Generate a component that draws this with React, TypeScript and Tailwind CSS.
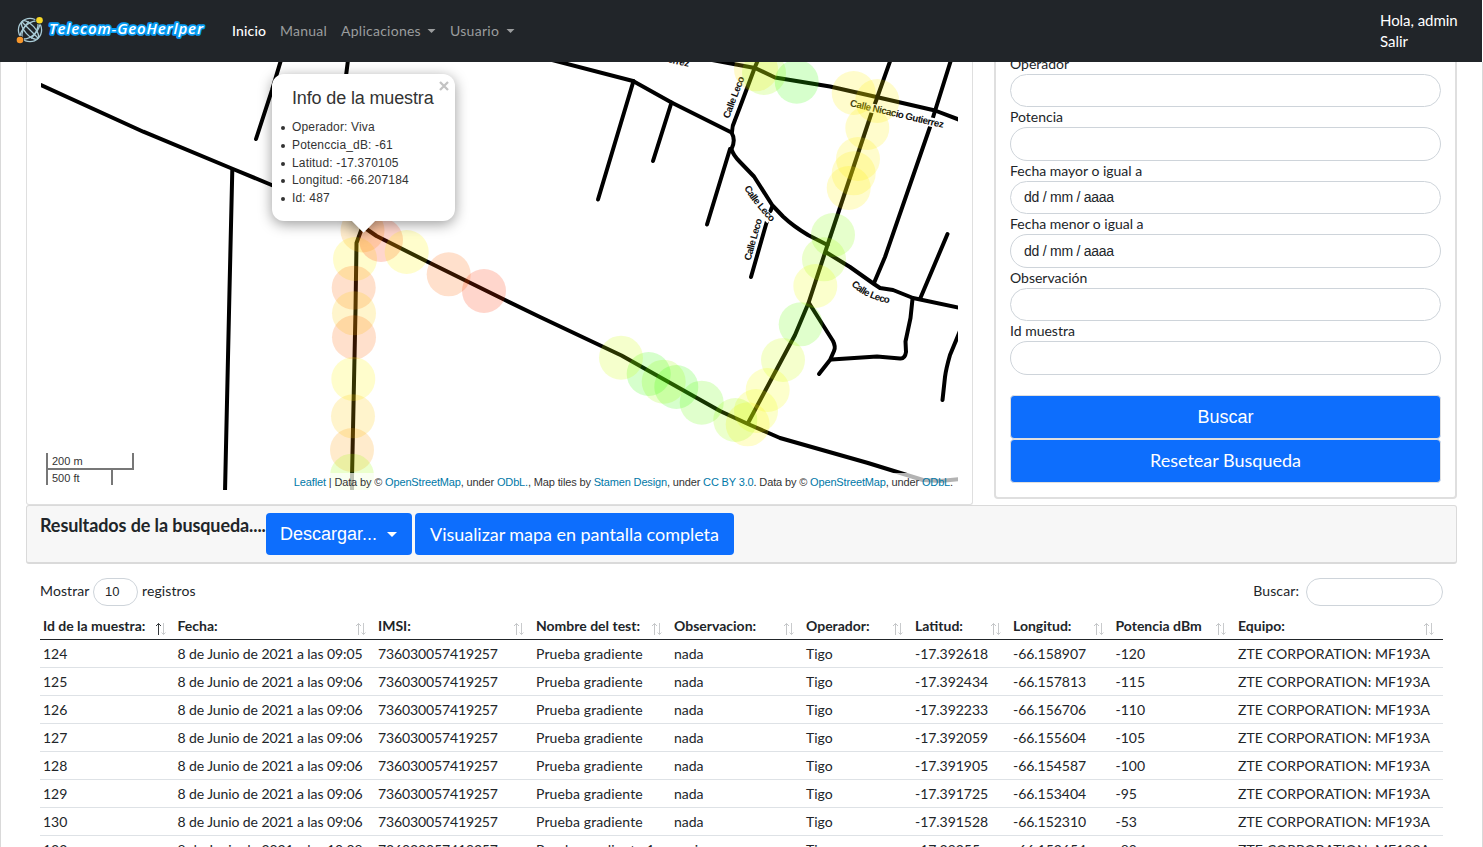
import React from 'react';

const ROADS = [
  'M41 85L143.3 131.7L233 169L274 186',
  'M232.3 170L229.5 290L225 492',
  'M281 60L272 90L256 139',
  'M348 60L346 76',
  'M362 228L356.5 243L355.5 310L352 477V492',
  'M365 228L376.5 236L428 262L505 300L540 317L621.5 355.5L720 411L748 424L780 438L868 463L923 480L940 481L960 479',
  'M552 60L633 81L671.5 102.5L731.5 132.5Q736 140 731.5 149Q733 155 740 162L754 176.5L772.5 205.5L783 216.5Q793 226 808 235L827.5 245',
  'M633.5 81L598 199.5',
  'M671.5 102.5L653 161',
  'M730 149L707 224.5',
  'M732 132Q732 126 735 120L740 107L755 67L758 60',
  'M712 60L755 68L775 77.5L830 86.5L876.5 97L935 110.5L960 120',
  'M890.5 60L877 98L871.5 113L827.5 245L808.5 303L795 335L748 423',
  'M951 60L935 111L930 127L885 257L874 283',
  'M826.5 252.5L850 267L874 284L880 288L893 290L913 298L960 308',
  'M947.5 234L920 299',
  'M912.5 299L910.5 318L905.5 341.5L906 352Q905 359 900 358.5L877 356.5L831.5 359.5',
  'M809 303L833 341Q836 347 834 351L830 360L819 374',
  'M960 331L950 355Q946 369 945 377L942.5 400',
  'M772.5 206L770.5 211M767 221L751 277',
];

const SAMPLES: [number, number, string][] = [
  [362.5, 230.5, '#ffa200'], [355, 259, '#fff000'], [353.7, 287.7, '#ff6600'], [381, 240, '#ff3300'],
  [406.7, 252, '#fff600'], [448.7, 274.3, '#ff6600'], [484, 291, '#ff3300'], [354, 313.3, '#ffcc00'],
  [354, 337.3, '#ff6600'], [353.3, 379, '#fff600'], [353, 416.3, '#ffc800'], [352, 450, '#ff9900'],
  [352, 475.7, '#99ff00'], [756, 69.3, '#ffe600'], [764, 73, '#99ff00'], [796.7, 81.7, '#33ff00'],
  [853.7, 93, '#ffee00'], [877.3, 101, '#ffee00'], [867.3, 128, '#ffee00'], [858, 159, '#ffee00'],
  [853.7, 173.3, '#ffee00'], [848.7, 188, '#ffee00'], [833, 235, '#80ff00'], [824, 259.3, '#a0ff00'],
  [815.3, 286, '#eaff00'], [800.7, 324.3, '#66ff00'], [783, 360, '#ccff00'], [767.7, 390, '#f6ff00'],
  [756, 411, '#f0ff00'], [747.7, 424.3, '#fff600'], [735.3, 420, '#99ff00'], [701.7, 402.7, '#66ff00'],
  [676.3, 387, '#33ff00'], [663.7, 381.7, '#99ff00'], [648.7, 374, '#33ff00'], [621, 357.7, '#ccff00'],
];

const STREETS = [
  { name: 'Calle Leco', d: 'M729 119L745 77', length: 44 },
  { name: 'Calle Leco', d: 'M750.500 261L762.500 218', length: 43 },
  { name: 'Calle Leco', d: 'M744 188Q753 204 772 223', length: 44 },
  { name: 'Calle Leco', d: 'M851 285Q866 300 893 304', length: 43 },
  { name: 'Calle Nicacio Gutierrez', d: 'M849.500 106L945 128.500', length: 96 },
  { name: 'Calle Nicacio Gutierrez', d: 'M595 45L691 67.500', length: 96 },
];

function MapCanvas() {
  return (
    <svg className="block h-[428px] w-[917px]" viewBox="41 62 917 428">
      <defs>
        {STREETS.map((s) => <path key={s.d} id={s.d.replace(/\W/g, '')} d={s.d} />)}
      </defs>
      <g fill="none" stroke="#000" strokeWidth="4" strokeLinecap="round" strokeLinejoin="round">
        {ROADS.map((d) => <path key={d} d={d} />)}
        {STREETS.map((s) => (
          <path key={s.d} d={s.d} stroke="#fff" strokeWidth="9" strokeLinecap="butt" transform={s.name === 'Calle Leco' ? 'translate(-1.500 -3)' : 'translate(0.500 -3)'} />
        ))}
      </g>
      <g fontFamily="Liberation Sans, sans-serif" fontSize="9.800" fontWeight="700" fill="#111">
        {STREETS.map((s) => (
          <text key={s.d}><textPath href={`#${s.d.replace(/\W/g, '')}`} textLength={s.length}>{s.name}</textPath></text>
        ))}
      </g>
      <g fillOpacity="0.2">
        {SAMPLES.map(([x, y, c]) => <circle key={`${x}-${y}`} cx={x} cy={y} r="22" fill={c} />)}
      </g>
    </svg>
  );
}

function Popup() {
  return (
    <div className="absolute left-[231px] top-[12px] h-[147px] w-[183px] text-[#333]">
      <div className="absolute left-[83px] top-[138px] size-[17px] rotate-45 bg-white shadow-[0_3px_14px_rgba(0,0,0,0.4)]" />
      <div className="relative h-full rounded-xl bg-white shadow-[0_3px_14px_rgba(0,0,0,0.4)]" />
      <div className="absolute left-[83px] top-[138px] size-[17px] rotate-45 bg-white" />
      <div className="absolute inset-0 pl-5 pt-[13px]">
        <svg className="absolute right-[6px] top-[7px] size-[10px]" viewBox="0 0 10 10"><path d="M1 1L9 9M9 1L1 9" stroke="#c3c3c3" strokeWidth="2.3" /></svg>
        <h4 className="whitespace-nowrap text-[18px] leading-[22px] tracking-[-0.14px]">Info de la muestra</h4>
        <ul className="mt-[10px] text-[12px] leading-[17.800px] tracking-[0.17px]">
          {['Operador: Viva', 'Potenccia_dB: -61', 'Latitud: -17.370105', 'Longitud: -66.207184', 'Id: 487'].map((t) => (
            <li key={t} className="relative whitespace-nowrap before:absolute before:-left-[11px] before:top-[7px] before:size-1 before:rounded-full before:bg-[#333]">{t}</li>
          ))}
        </ul>
      </div>
    </div>
  );
}

const A = ({ children }: { children: string }) => <span className="text-[#0078a8]">{children}</span>;

function Caret({ className }: { className: string }) {
  return <svg className={className} viewBox="0 0 10 5"><path d="M0 0H10L5 5Z" fill="currentColor" /></svg>;
}

function Logo() {
  return (
    <svg className="h-[62px] w-[208px]" viewBox="0 0 208 62">
      <g fill="none" stroke="#a9cbd6" strokeWidth="1.3">
        <circle cx="30" cy="30" r="11.6" />
        <ellipse cx="30" cy="30" rx="5" ry="11.6" transform="rotate(-42 30 30)" />
        <ellipse cx="30" cy="30" rx="11.6" ry="6" transform="rotate(-42 30 30)" />
        <path d="M22 22L38 38M22 38Q21 29 29 21.500M38 22Q39 31 31 38.500" />
      </g>
      <circle cx="39.500" cy="20.300" r="4.200" fill="#212529" />
      <circle cx="39.500" cy="20.300" r="3.300" fill="#f7d826" />
      <circle cx="20" cy="40" r="4.200" fill="#212529" />
      <circle cx="20" cy="40" r="3.300" fill="#f7962a" />
      <g fontFamily="Open Sans, sans-serif" fontSize="15" fontStyle="italic" fontWeight="600">
        <text x="49" y="33.500" textLength="154" fill="#fff" stroke="#069df5" strokeWidth="3.600" strokeLinejoin="round" paintOrder="stroke">Telecom-GeoHerlper</text>
      </g>
    </svg>
  );
}

function Navbar() {
  return (
    <header className="relative z-10 flex h-[62px] w-[1482px] items-center bg-[#212529] text-[14px] text-[#9b9d9e]">
      <Logo />
      <nav className="-mt-[2px] ml-6 flex items-center gap-[14px] whitespace-nowrap">
        <span className="font-medium tracking-[0.15px] text-white">Inicio</span>
        <span className="tracking-[0.22px]">Manual</span>
        <span className="flex items-center tracking-[0.25px]">Aplicaciones<Caret className="ml-[6px] mt-px h-[4px] w-[9px]" /></span>
        <span className="flex items-center tracking-[0.3px]">Usuario<Caret className="ml-[7px] mt-px h-[4px] w-[9px]" /></span>
      </nav>
      <div className="ml-auto mr-[24px] w-[78px] whitespace-nowrap text-[15px] leading-[21px] tracking-[-0.05px] text-white">
        <div>Hola, admin</div>
        <div>Salir</div>
      </div>
    </header>
  );
}

const FIELDS: [string, string][] = [
  ['Operador', ''], ['Potencia', ''], ['Fecha mayor o igual a', 'dd / mm / aaaa'],
  ['Fecha menor o igual a', 'dd / mm / aaaa'], ['Observación', ''], ['Id muestra', ''],
];

function SearchForm() {
  return (
    <section className="-mt-[10.200px] ml-[21px] h-[447px] w-[463px] rounded border-2 border-[#dfdfdf] px-[14px] text-[14px]">
      {FIELDS.map(([label, value]) => (
        <div key={label}>
          <div className="h-5 leading-[20.600px]">{label}</div>
          <div className="flex h-[33.500px] items-center rounded-full border border-[#ced4da] px-[13px] font-[Liberation_Sans,sans-serif] text-[14px] tracking-[-0.25px]">{value}</div>
        </div>
      ))}
      <div className="mt-5 flex flex-col text-[18px] text-white">
        <button className="h-[44px] rounded border border-[#dfdfdf] bg-[#0d6efd] pt-px font-[Liberation_Sans,sans-serif]">Buscar</button>
        <button className="h-[44px] rounded border border-[#dfdfdf] bg-[#0d6efd]">Resetear Busqueda</button>
      </div>
    </section>
  );
}

const COLS = 'grid grid-cols-[134.500px_200.500px_158px_138px_132px_109px_98px_102.500px_122.500px_208px]';
const HEAD = ['Id de la muestra:', 'Fecha:', 'IMSI:', 'Nombre del test:', 'Observacion:', 'Operador:', 'Latitud:', 'Longitud:', 'Potencia dBm', 'Equipo:'];
const TRACKING = [
  '', 'tracking-[-0.09px]', 'tracking-[-0.13px]', 'tracking-[0.12px]', '', '', 'tracking-[-0.04px]', 'tracking-[-0.04px]', '', 'tracking-[0.08px]',
];
const row = (id: string, time: string, lat: string, lng: string, dbm: string, test = 'Prueba gradiente', obs = 'nada') => [
  id, `8 de Junio de 2021 a las ${time}`, '736030057419257', test, obs, 'Tigo', lat, lng, dbm, 'ZTE CORPORATION: MF193A',
];
const ROWS = [
  row('124', '09:05', '-17.392618', '-66.158907', '-120'),
  row('125', '09:06', '-17.392434', '-66.157813', '-115'),
  row('126', '09:06', '-17.392233', '-66.156706', '-110'),
  row('127', '09:06', '-17.392059', '-66.155604', '-105'),
  row('128', '09:06', '-17.391905', '-66.154587', '-100'),
  row('129', '09:06', '-17.391725', '-66.153404', '-95'),
  row('130', '09:06', '-17.391528', '-66.152310', '-53'),
  row('132', '10:08', '-17.39255', '-66.152654', '-89', 'Prueba gradiente 1', 'vacio'),
];

function SortIcon({ active }: { active: boolean }) {
  return (
    <svg className="absolute right-[9px] top-[9px] h-[14px] w-[11px]" viewBox="0 0 11 14" fill="none">
      <path d="M3.500 13V1.500M1 4L3.500 1.500L6 4" stroke={active ? '#33373b' : '#c4c6c8'} />
      <path d="M8.500 1V12.500M6.500 10.500L8.500 12.500L10.500 10.500" stroke="#c9cbcd" />
    </svg>
  );
}

function Results() {
  return (
    <div>
      <div className="ml-[26px] flex h-[59px] w-[1431px] rounded-[3px] border border-b-2 border-[#dadada] bg-[#f7f7f7] pl-[13px] pt-[7px] text-[18px]">
        <h2 className="w-[226px] whitespace-nowrap font-bold leading-[24px] tracking-[-0.1px]">Resultados de la busqueda....</h2>
        <button className="flex h-[42px] w-[146px] items-center rounded bg-[#0d6efd] pl-[14px] font-[Liberation_Sans,sans-serif] text-white">Descargar...<Caret className="ml-[10px] h-[5px] w-[10px]" /></button>
        <button className="ml-[3px] h-[42px] w-[319px] whitespace-nowrap rounded bg-[#0d6efd] tracking-[-0.04px] text-white">Visualizar mapa en pantalla completa</button>
      </div>
      <div className="ml-10 w-[1403px] text-[14px]">
        <div className="flex h-[49px] items-start justify-between pt-[14px] tracking-[0.1px]">
          <div className="flex h-[28px] items-center">
            <span className="-mt-[3px] w-[53px]">Mostrar</span>
            <span className="flex h-[28px] w-[45px] items-center rounded-full border border-[#ced4da] pl-[11px] font-[Liberation_Sans,sans-serif] text-[13px]">10</span>
            <span className="-mt-[3px] ml-[4px]">registros</span>
          </div>
          <div className="flex h-[28px] items-center">
            <span className="-mt-[3px] mr-[7px]">Buscar:</span>
            <span className="h-[28px] w-[137px] rounded-full border border-[#ced4da]" />
          </div>
        </div>
        <div className={`${COLS} h-[27px] border-b border-[#212529] font-bold`}>
          {HEAD.map((h, i) => (
            <div key={h} className="relative whitespace-nowrap pl-[3px] leading-[26px]">{h}<SortIcon active={i === 0} /></div>
          ))}
        </div>
        {ROWS.map((r) => (
          <div key={r[0]} className={`${COLS} h-[28px] border-b border-[#dee2e6]`}>
            {r.map((c, i) => <div key={i} className={`whitespace-nowrap pl-[3px] leading-[28px] ${TRACKING[i]}`}>{c}</div>)}
          </div>
        ))}
      </div>
    </div>
  );
}

export default function App() {
  return (
    <div className="h-[847px] w-[1483px] overflow-hidden bg-white font-[Lato,sans-serif] text-[#212529]">
      <Navbar />
      <div className="h-[785px] border-x border-[#d9d9d9]">
        <div className="-ml-px">
          <main className="flex h-[443px] items-start">
            <section className="ml-[26px] h-[443px] w-[947px] rounded-b-[3px] border border-t-0 border-[#dfdfdf] pl-[14px] font-[Liberation_Sans,sans-serif]">
              <div className="relative h-[428px] w-[917px] overflow-hidden">
                <MapCanvas />
                <Popup />
                <div className="absolute bottom-[5px] left-[5px] text-[11px] text-[#333]">
                  <div className="h-[17px] w-[88px] border-2 border-t-0 border-[#777] pl-1 leading-[17px]">200 m</div>
                  <div className="h-[15px] w-[67px] border-x-2 border-[#777] pl-1 leading-[17px]">500 ft</div>
                </div>
                <div className="absolute bottom-0 right-0 h-[17px] whitespace-nowrap bg-white/70 px-[5px] text-[11px] leading-[18px] tracking-[-0.147px] text-[#333]">
                  <A>Leaflet</A> | Data by © <A>OpenStreetMap</A>, under <A>ODbL.</A>, Map tiles by <A>Stamen Design</A>, under <A>CC BY 3.0</A>. Data by © <A>OpenStreetMap</A>, under <A>ODbL</A>.
                </div>
              </div>
            </section>
            <SearchForm />
          </main>
          <Results />
        </div>
      </div>
    </div>
  );
}
